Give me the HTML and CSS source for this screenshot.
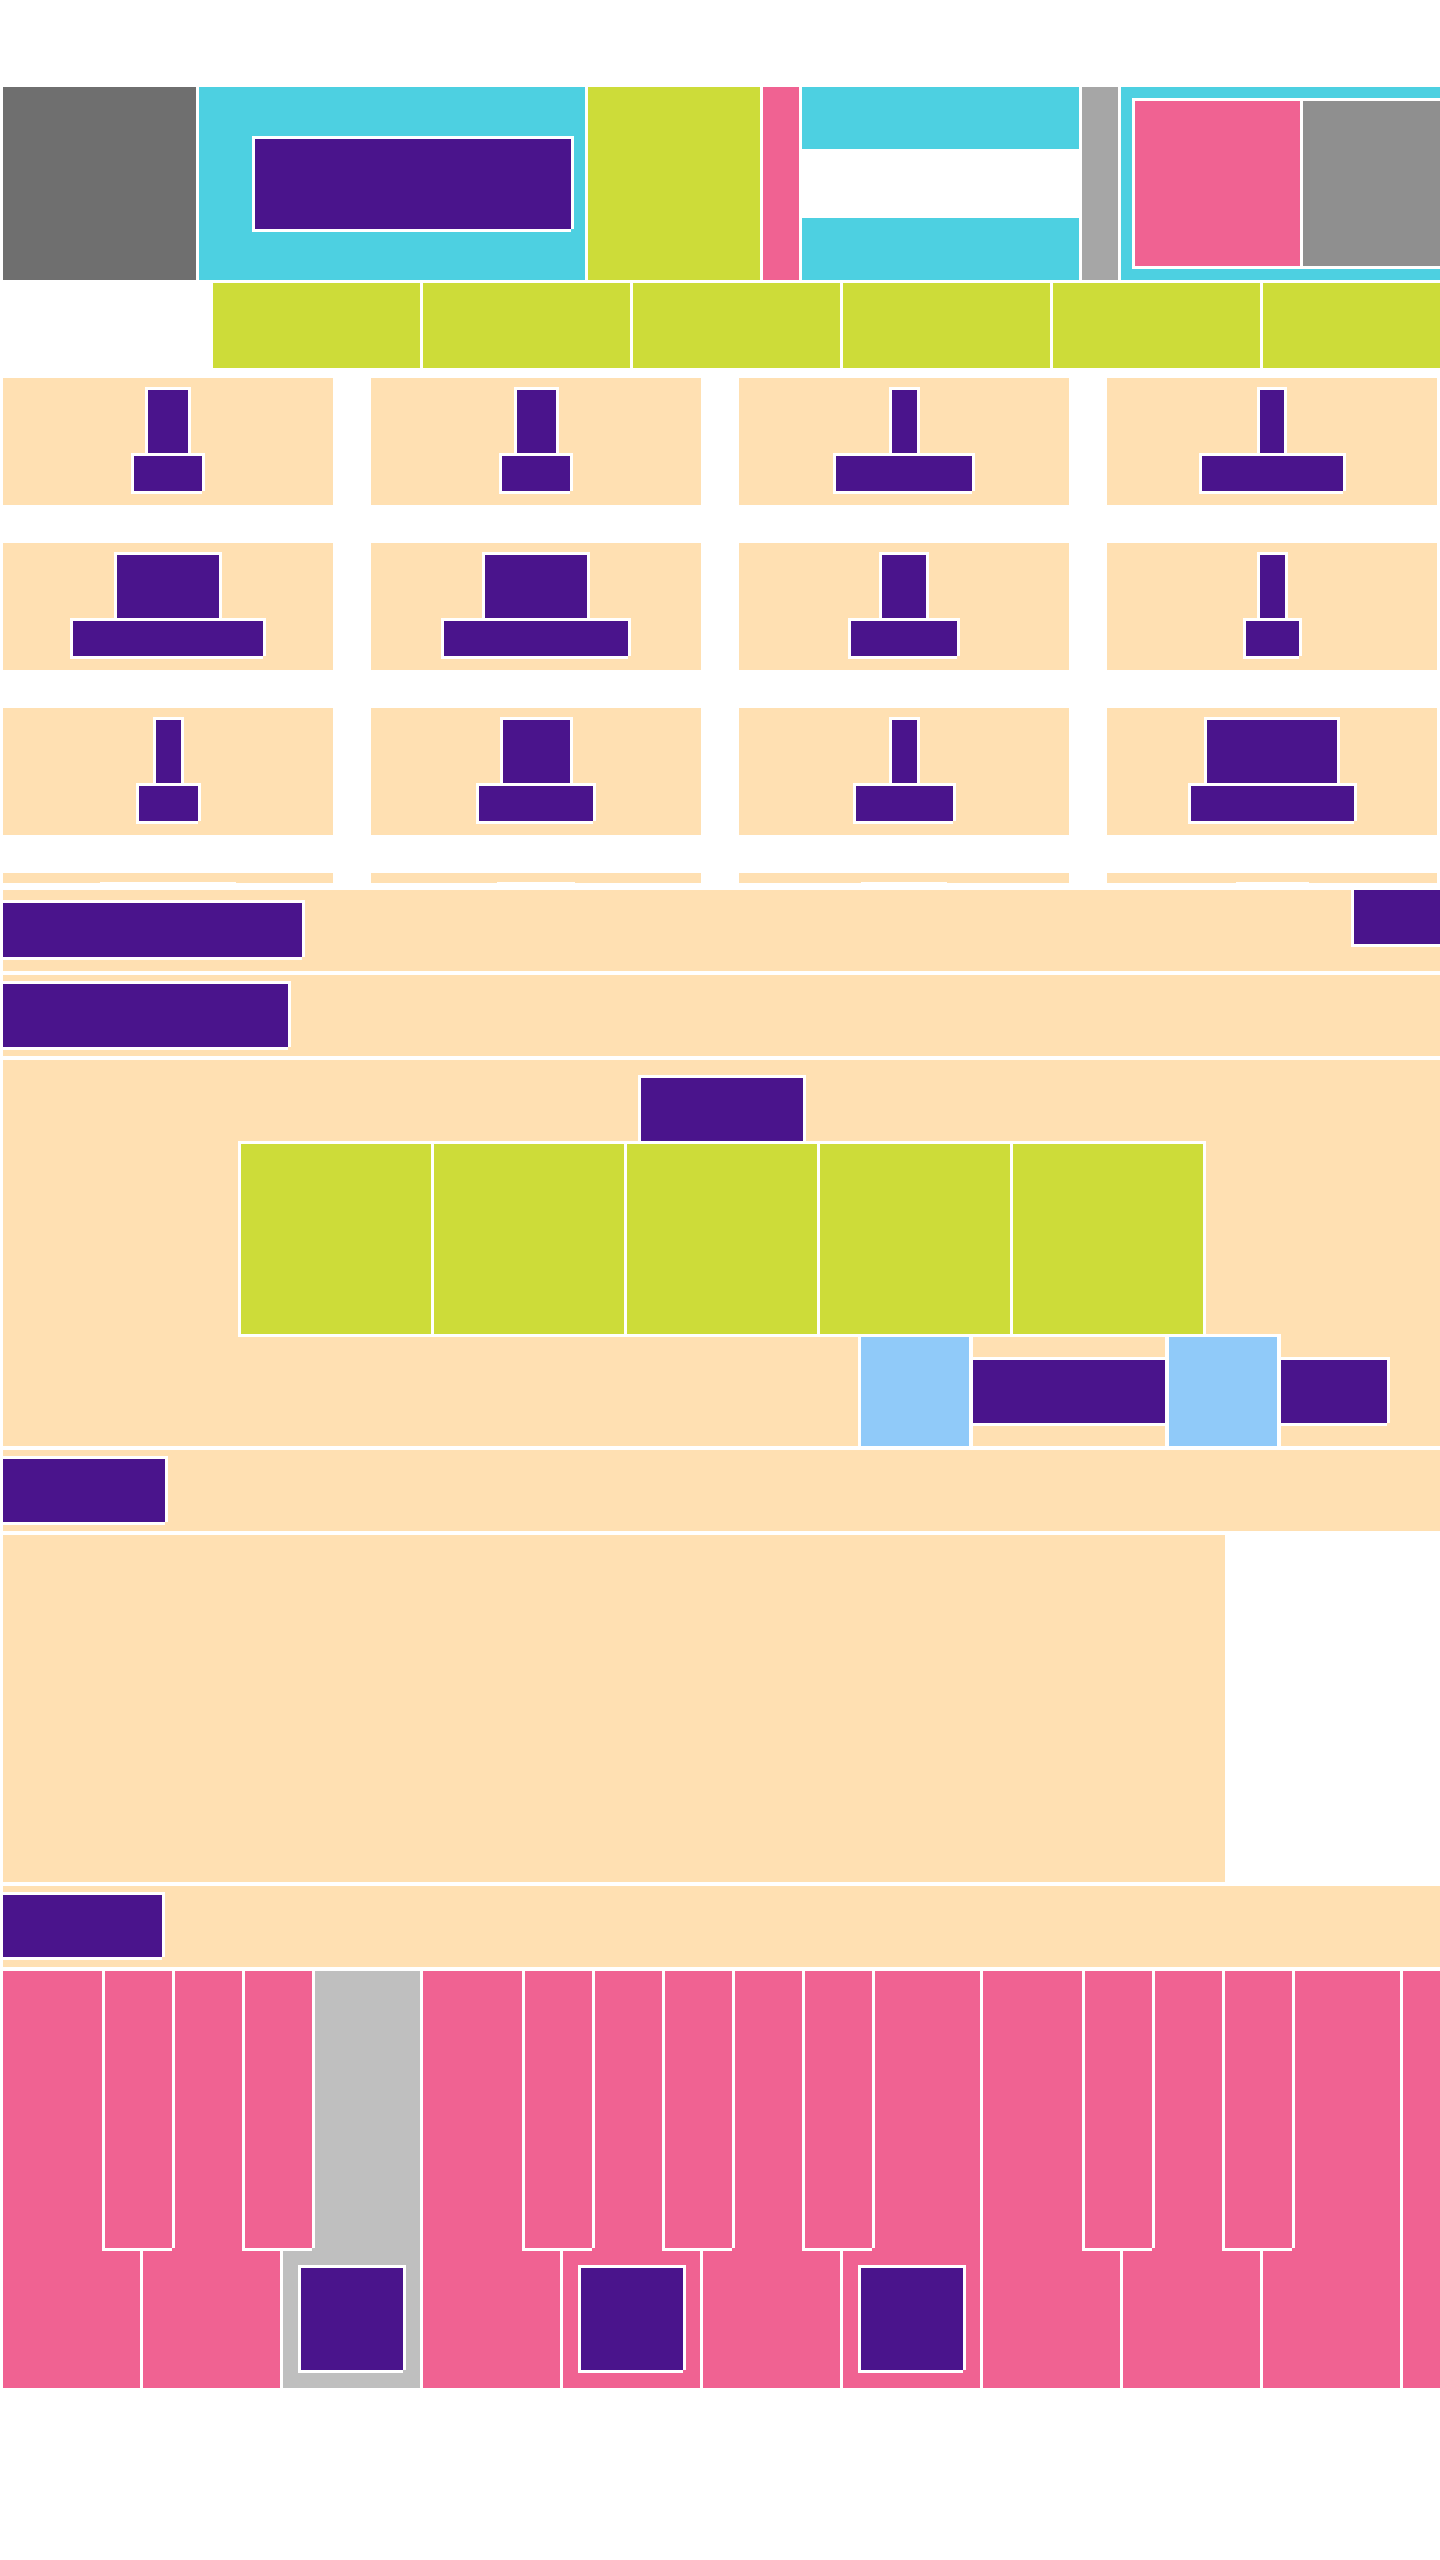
FILE: index.html
```html
<!DOCTYPE html>
<html lang="en">
<head>
<meta charset="utf-8">
<title>Layout</title>
<link rel="stylesheet" href="styles.css">
</head>
<body>
<div class="page">
  <header class="hero">
    <div class="logo"></div>
    <div class="hero-main"><div class="pu hero-cta"></div></div>
    <div class="hero-lime"></div>
    <div class="hero-pink"></div>
    <div class="hero-stack"><div class="stack-item"></div><div class="stack-item"></div></div>
    <div class="hero-gray"></div>
    <div class="hero-side"><div class="pair"><div class="pair-a"></div><div class="pair-b"></div></div></div>
  </header>

  <nav class="subnav">
    <div class="tab"></div><div class="tab"></div><div class="tab"></div>
    <div class="tab"></div><div class="tab"></div><div class="tab"></div>
  </nav>

  <section class="tiles">
    <div class="tile"><div class="pu stem" style="width:40px"></div><div class="pu base" style="width:68px"></div></div>
    <div class="tile"><div class="pu stem" style="width:39px"></div><div class="pu base" style="width:68px"></div></div>
    <div class="tile"><div class="pu stem" style="width:25px"></div><div class="pu base" style="width:136px"></div></div>
    <div class="tile"><div class="pu stem" style="width:24px"></div><div class="pu base" style="width:141px"></div></div>

    <div class="tile"><div class="pu stem" style="width:102px"></div><div class="pu base" style="width:190px"></div></div>
    <div class="tile"><div class="pu stem" style="width:102px"></div><div class="pu base" style="width:184px"></div></div>
    <div class="tile"><div class="pu stem" style="width:44px"></div><div class="pu base" style="width:106px"></div></div>
    <div class="tile"><div class="pu stem" style="width:25px"></div><div class="pu base" style="width:53px"></div></div>

    <div class="tile"><div class="pu stem" style="width:25px"></div><div class="pu base" style="width:59px"></div></div>
    <div class="tile"><div class="pu stem" style="width:67px"></div><div class="pu base" style="width:114px"></div></div>
    <div class="tile"><div class="pu stem" style="width:25px"></div><div class="pu base" style="width:97px"></div></div>
    <div class="tile"><div class="pu stem" style="width:130px"></div><div class="pu base" style="width:163px"></div></div>

    <div class="tile"><div class="pu stem" style="width:130px"></div><div class="pu base" style="width:160px"></div></div>
    <div class="tile"><div class="pu stem" style="width:72px"></div><div class="pu base" style="width:110px"></div></div>
    <div class="tile"><div class="pu stem" style="width:80px"></div><div class="pu base" style="width:120px"></div></div>
    <div class="tile"><div class="pu stem" style="width:67px"></div><div class="pu base" style="width:100px"></div></div>
  </section>

  <section class="band band-bar">
    <div class="pu bar-title"></div>
    <div class="pu bar-action"></div>
  </section>

  <section class="band band-head">
    <div class="pu head-a"></div>
  </section>

  <section class="band band-feature">
    <div class="pu feature-title"></div>
    <div class="gallery">
      <div class="cell"></div><div class="cell"></div><div class="cell"></div><div class="cell"></div><div class="cell"></div>
    </div>
    <div class="controls">
      <div class="ctrl-row">
        <div class="ctrl-blue"></div>
        <div class="ctrl-mid"><div class="pu ctrl-btn"></div></div>
        <div class="ctrl-blue"></div>
      </div>
      <div class="pu ctrl-last"></div>
    </div>
  </section>

  <section class="band band-head">
    <div class="pu head-b"></div>
  </section>

  <section class="band band-body"></section>

  <section class="band band-head">
    <div class="pu head-c"></div>
  </section>

  <section class="piano">
    <div class="key"></div>
    <div class="key"></div>
    <div class="key key-on"><div class="pu marker"></div></div>
    <div class="key"></div>
    <div class="key"><div class="pu marker"></div></div>
    <div class="key"></div>
    <div class="key"><div class="pu marker"></div></div>
    <div class="key"></div>
    <div class="key"></div>
    <div class="key"></div>
    <div class="key"></div>
    <div class="sharp" style="left:102px"></div>
    <div class="sharp" style="left:242px"></div>
    <div class="sharp" style="left:522px"></div>
    <div class="sharp" style="left:662px"></div>
    <div class="sharp" style="left:802px"></div>
    <div class="sharp" style="left:1082px"></div>
    <div class="sharp" style="left:1222px"></div>
  </section>
</div>
</body>
</html>
```

FILE: styles.css
```css
html, body {
  margin: 0;
  padding: 0;
  background: #ffffff;
  font-family: "Liberation Sans", Arial, sans-serif;
}

.page {
  width: 1440px;
  height: 2560px;
  overflow: hidden;
  padding: 87px 0 0 3px;
  box-sizing: border-box;
}

/* white outline used by the purple elements */
.pu {
  background: #4a148c;
  box-shadow: -3px -3px 0 #fff, 3px -3px 0 #fff, -3px 3px 0 #fff, 3px 0 0 #fff, 0 3px 0 #fff;
  flex: none;
}

/* ---------- hero ---------- */
.hero {
  display: flex;
  gap: 3px;
  height: 193px;
}
.hero > * { flex: none; }

.logo { width: 193px; background: #6f6f6f; }

.hero-main {
  width: 386px;
  background: #4dd0e1;
  display: flex;
  align-items: center;
  padding-left: 56px;
  box-sizing: border-box;
}
.hero-cta { width: 316px; height: 90px; }

.hero-lime { width: 172px; background: #cddc39; }
.hero-pink { width: 36px; background: #f06292; }

.hero-stack {
  width: 277px;
  display: flex;
  flex-direction: column;
  justify-content: space-between;
}
.stack-item { height: 62px; background: #4dd0e1; }

.hero-gray { width: 36px; background: #a6a6a6; }

.hero-side {
  width: 340px;
  padding: 11px;
  box-sizing: border-box;
  background: #4dd0e1;
}
.pair {
  display: flex;
  gap: 3px;
  padding: 3px;
  height: 100%;
  box-sizing: border-box;
  background: #fff;
}
.pair-a { width: 165px; flex: none; background: #f06292; }
.pair-b { flex: 1; background: #8f8f8f; }

/* ---------- sub navigation ---------- */
.subnav {
  display: flex;
  gap: 3px;
  height: 85px;
  margin: 3px 0 0 210px;
}
.tab { width: 207px; flex: none; background: #cddc39; }

/* ---------- tiles ---------- */
.tiles {
  display: grid;
  grid-template-columns: repeat(4, 330px);
  grid-auto-rows: 127px;
  gap: 38px;
  margin-top: 10px;
  height: 505px;
  overflow: hidden;
}
.tile {
  background: #ffe0b2;
  display: flex;
  flex-direction: column;
  align-items: center;
  padding-top: 12px;
  box-sizing: border-box;
}
.stem { height: 63px; }
.base { height: 35px; margin-top: 3px; }

/* ---------- bands ---------- */
.band {
  width: 1437px;
  background: #ffe0b2;
  margin-top: 4px;
  box-sizing: border-box;
}

.band-bar {
  margin-top: 7px;
  height: 81px;
  display: flex;
  justify-content: space-between;
  align-items: flex-start;
}
.bar-title { width: 299px; height: 54px; margin-top: 13px; }
.bar-action { width: 86px; height: 54px; }

.band-head {
  height: 81px;
  padding-top: 9px;
  display: flex;
  align-items: flex-start;
}
.head-a { width: 285px; height: 63px; }
.head-b { width: 162px; height: 63px; }
.head-c { width: 159px; height: 62px; }

.band-feature {
  height: 386px;
  display: flex;
  flex-direction: column;
  align-items: center;
}
.feature-title { width: 162px; height: 63px; margin-top: 18px; }

.gallery {
  display: flex;
  gap: 3px;
  padding: 3px;
  background: #fff;
}
.cell { width: 190px; height: 190px; background: #cddc39; }

.controls {
  align-self: flex-start;
  margin-left: 855px;
  height: 109px;
  display: flex;
  align-items: flex-start;
}
.ctrl-row {
  display: flex;
  gap: 4px;
  padding: 0 4px 0 3px;
  height: 109px;
  background: #fff;
  box-shadow: 0 -3px 0 #fff;
}
.ctrl-blue { width: 108px; background: #90caf9; }
.ctrl-mid { width: 192px; background: #ffe0b2; }
.ctrl-btn { width: 192px; height: 63px; margin-top: 23px; }
.ctrl-last { width: 106px; height: 63px; margin-top: 23px; }

.band-body {
  width: 1222px;
  height: 347px;
}

/* ---------- piano ---------- */
.piano {
  position: relative;
  display: flex;
  gap: 3px;
  height: 417px;
  margin-top: 4px;
}
.key {
  width: 137px;
  flex: none;
  background: #f06292;
  display: flex;
  flex-direction: column;
  justify-content: flex-end;
  align-items: center;
  padding-bottom: 18px;
  box-sizing: border-box;
}
.key-on { background: #bfbfbf; }
.marker { width: 102px; height: 102px; }

.sharp {
  position: absolute;
  top: 0;
  width: 67px;
  height: 277px;
  background: #f06292;
  box-shadow: -3px -3px 0 #fff, 3px -3px 0 #fff, -3px 3px 0 #fff, 3px 0 0 #fff, 0 3px 0 #fff;
}
```
